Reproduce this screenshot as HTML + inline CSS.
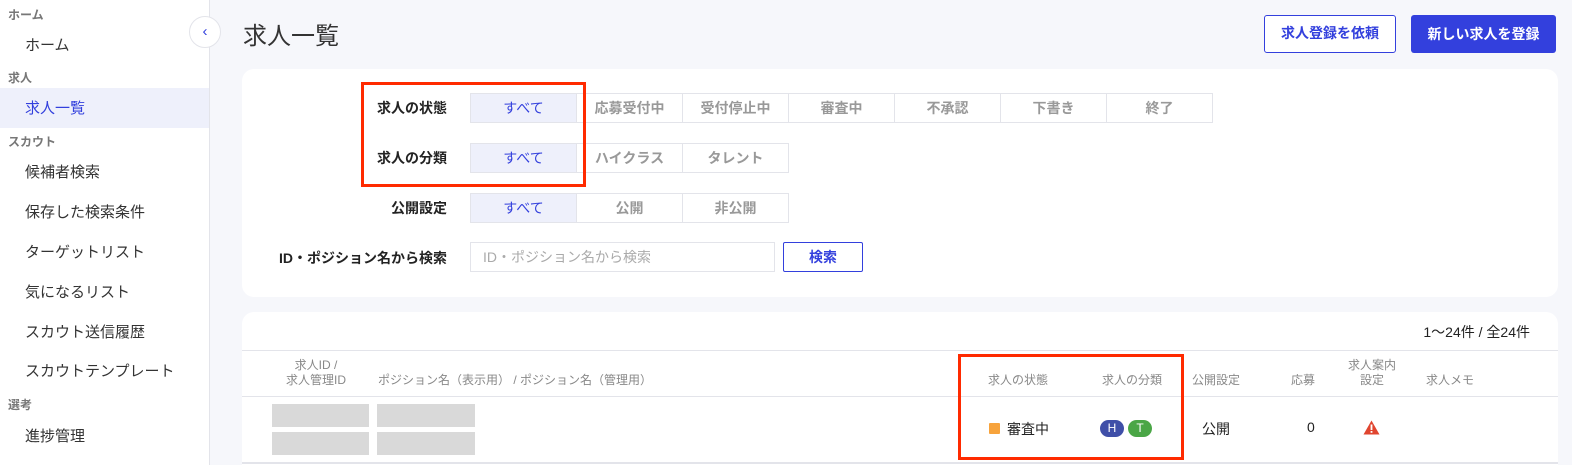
<!DOCTYPE html>
<html><head><meta charset="utf-8"><style>
*{box-sizing:border-box;margin:0;padding:0}
html,body{width:1572px;height:465px;overflow:hidden}
body{background:#f6f7fb;font-family:"Liberation Sans","Noto Sans CJK JP",sans-serif;color:#222;position:relative}
.a{position:absolute;white-space:nowrap}
#side{position:absolute;left:0;top:0;width:210px;height:465px;background:#fff;border-right:1px solid #e3e4ea}
.sec{position:absolute;left:8px;font-size:12px;font-weight:bold;color:#777}
.it{position:absolute;left:25px;font-size:15px;color:#333}
.card{position:absolute;background:#fff;border-radius:12px}
.seg{position:absolute;display:flex;height:30px}
.seg div{width:107px;height:30px;border:1px solid #e3e4ea;margin-left:-1px;font-size:14px;color:#999;text-align:center;line-height:28px;font-weight:bold}
.seg div.on{background:#eef0fb;color:#3340dd;font-weight:normal}
.lab{position:absolute;font-size:14px;font-weight:bold;text-align:right;width:200px}
.red{position:absolute;border:3px solid #ff2a00}
.th{position:absolute;font-size:12px;color:#888;text-align:center;line-height:15px}
.gr{position:absolute;background:#d9d9d9}
</style></head><body>
<div id="side">
<div class="sec" style="top:6px">ホーム</div>
<div class="it" style="top:34px">ホーム</div>
<div class="sec" style="top:69px">求人</div>
<div style="position:absolute;left:0;top:88px;width:209px;height:40px;background:#eef0fb"></div>
<div class="it" style="top:97px;color:#3340dd">求人一覧</div>
<div class="sec" style="top:133px">スカウト</div>
<div class="it" style="top:161px">候補者検索</div>
<div class="it" style="top:201px">保存した検索条件</div>
<div class="it" style="top:241px">ターゲットリスト</div>
<div class="it" style="top:281px">気になるリスト</div>
<div class="it" style="top:321px">スカウト送信履歴</div>
<div class="it" style="top:360px">スカウトテンプレート</div>
<div class="sec" style="top:396px">選考</div>
<div class="it" style="top:425px">進捗管理</div>
</div>
<div class="a" style="left:189px;top:16px;width:32px;height:32px;border-radius:50%;background:#fff;border:1px solid #e3e4ea;text-align:center;line-height:29px;color:#3340dd;font-size:15px">‹</div>
<div class="a" style="left:243px;top:16px;font-size:24px;color:#333">求人一覧</div>
<div class="a" style="left:1264px;top:15px;width:132px;height:38px;border:1.5px solid #3340dd;border-radius:3px;background:#fff;color:#3340dd;font-weight:bold;font-size:14px;text-align:center;line-height:35px">求人登録を依頼</div>
<div class="a" style="left:1411px;top:15px;width:145px;height:38px;border-radius:3px;background:#3340dd;color:#fff;font-weight:bold;font-size:14px;text-align:center;line-height:38px">新しい求人を登録</div>

<div class="card" style="left:242px;top:69px;width:1316px;height:228px"></div>
<div class="lab" style="left:247px;top:98px">求人の状態</div>
<div class="seg" style="left:471px;top:93px"><div class="on">すべて</div><div>応募受付中</div><div>受付停止中</div><div>審査中</div><div>不承認</div><div>下書き</div><div>終了</div></div>
<div class="lab" style="left:247px;top:148px">求人の分類</div>
<div class="seg" style="left:471px;top:143px"><div class="on">すべて</div><div>ハイクラス</div><div>タレント</div></div>
<div class="lab" style="left:247px;top:198px">公開設定</div>
<div class="seg" style="left:471px;top:193px"><div class="on">すべて</div><div>公開</div><div>非公開</div></div>
<div class="lab" style="left:247px;top:248px">ID・ポジション名から検索</div>
<div class="a" style="left:470px;top:242px;width:305px;height:30px;border:1px solid #e3e4ea;font-size:14px;color:#aaa;line-height:28px;padding-left:12px">ID・ポジション名から検索</div>
<div class="a" style="left:783px;top:242px;width:80px;height:30px;border:1px solid #3340dd;border-radius:2px;font-size:14px;color:#3340dd;font-weight:bold;text-align:center;line-height:28px">検索</div>
<div class="red" style="left:361px;top:82px;width:225px;height:105px"></div>

<div class="card" style="left:242px;top:312px;width:1316px;height:153px;border-radius:12px 12px 0 0"></div>
<div class="a" style="left:1400px;top:322px;width:130px;text-align:right;font-size:14px">1〜24件 / 全24件</div>
<div class="a" style="left:242px;top:350px;width:1316px;height:1px;background:#e3e4ea"></div>
<div class="a" style="left:242px;top:396px;width:1316px;height:1px;background:#e3e4ea"></div>
<div class="a" style="left:242px;top:462px;width:1316px;height:2px;background:#e3e4ea"></div>
<div class="th" style="left:266px;top:358px;width:100px">求人ID /<br>求人管理ID</div>
<div class="th" style="left:378px;top:373px;text-align:left">ポジション名（表示用） / ポジション名（管理用）</div>
<div class="th" style="left:968px;top:373px;width:100px">求人の状態</div>
<div class="th" style="left:1082px;top:373px;width:100px">求人の分類</div>
<div class="th" style="left:1176px;top:373px;width:80px">公開設定</div>
<div class="th" style="left:1273px;top:373px;width:60px">応募</div>
<div class="th" style="left:1332px;top:358px;width:80px">求人案内<br>設定</div>
<div class="th" style="left:1410px;top:373px;width:80px">求人メモ</div>
<div class="gr" style="left:272px;top:404px;width:97px;height:23px"></div>
<div class="gr" style="left:272px;top:432px;width:97px;height:23px"></div>
<div class="gr" style="left:377px;top:404px;width:98px;height:23px"></div>
<div class="gr" style="left:377px;top:432px;width:98px;height:23px"></div>
<div class="a" style="left:989px;top:423px;width:11px;height:11px;background:#f7a33c;border-radius:1px"></div>
<div class="a" style="left:1007px;top:419px;font-size:14px">審査中</div>
<div class="a" style="left:1100px;top:420px;width:24px;height:17px;border-radius:9px;background:#3f4fa8;color:#fff;font-size:12px;text-align:center;line-height:17px">H</div>
<div class="a" style="left:1128px;top:420px;width:24px;height:17px;border-radius:9px;background:#4aa646;color:#fff;font-size:12px;text-align:center;line-height:17px">T</div>
<div class="a" style="left:1202px;top:419px;font-size:14px">公開</div>
<div class="a" style="left:1307px;top:419px;font-size:14px">0</div>
<svg class="a" style="left:1363px;top:420px" width="17" height="15" viewBox="0 0 17 15"><path d="M8.5 0.5L16.5 14.5H0.5Z" fill="#e0452f"/><rect x="7.6" y="4.5" width="1.8" height="5.5" fill="#fff"/><rect x="7.6" y="11" width="1.8" height="1.8" fill="#fff"/></svg>
<div class="red" style="left:958px;top:354px;width:226px;height:106px"></div>
</body></html>
